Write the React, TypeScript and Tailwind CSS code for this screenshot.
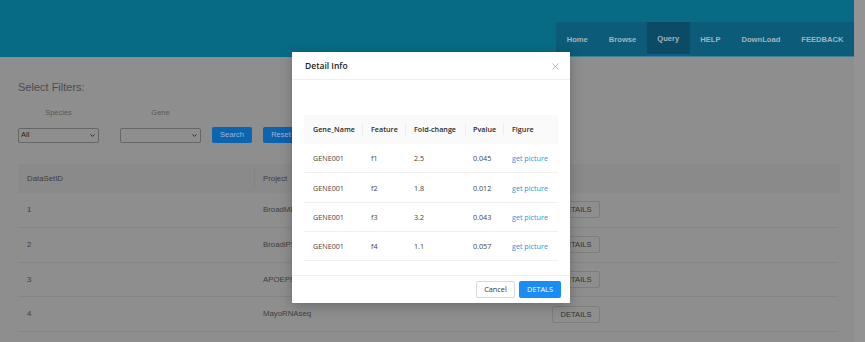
import React from "react";
import { X, ChevronDown } from "lucide-react";

const navItems = ["Home", "Browse", "Query", "HELP", "DownLoad", "FEEDBACK"];

const datasets = [
  { id: "1", project: "BroadMDMi" },
  { id: "2", project: "BroadiPSC" },
  { id: "3", project: "APOEPSC" },
  { id: "4", project: "MayoRNAseq" },
];

const genes = [
  { name: "GENE001", feature: "f1", fold: "2.5", p: "0.045" },
  { name: "GENE001", feature: "f2", fold: "1.8", p: "0.012" },
  { name: "GENE001", feature: "f3", fold: "3.2", p: "0.043" },
  { name: "GENE001", feature: "f4", fold: "1.1", p: "0.057" },
];

const cols = "grid grid-cols-[58px_43px_60px_38px_54px]";

// dimmed select box, drawn by hand so it looks the same everywhere
const FakeSelect = ({ value }: { value: string }) => (
  <div className="flex items-center justify-between w-[81px] h-[15px] border border-[#666] rounded-[2px] px-[2px] text-[7.5px] text-[#262626]">
    <span>{value}</span>
    <ChevronDown size={7} strokeWidth={3} className="text-[#222]" />
  </div>
);

const DetailModal = () => (
  <div className="absolute left-[292px] top-[52px] w-[278px] h-[251px] bg-white shadow-[0_3px_12px_rgba(0,0,0,0.25)] flex flex-col font-['Open_Sans',sans-serif]">
    {/* header */}
    <div className="h-[28px] flex items-center justify-between pl-[13px] pr-[9px] pt-[2px] border-b border-[#f0f0f0]">
      <span className="text-[8.5px] font-semibold text-[#222]">Detail Info</span>
      <X size={11} strokeWidth={1.3} className="text-[#888]" />
    </div>

    {/* body */}
    <div className="flex-1 px-[12px] pt-[35px]">
      <div className={`${cols} h-[29px] bg-[#fafafa] items-center text-[7.2px] font-semibold text-[#2b2b2b] whitespace-nowrap`}>
        {["Gene_Name", "Feature", "Fold-change", "Pvalue", "Figure"].map((h, i) => (
          <div key={h} className={`h-full flex items-center relative ${i === 3 ? "pl-[8px]" : "pl-[9px]"}`}>
            {i > 0 && <span className="absolute left-0 top-[9px] h-[11px] w-px bg-[#ececec]" />}
            {h}
          </div>
        ))}
      </div>
      {genes.map((g) => (
        <div
          key={g.feature}
          className={`${cols} h-[29.3px] pt-[1px] items-center border-b border-[#f0f0f0] text-[7.2px] text-[#444] whitespace-nowrap`}
        >
          <div className="pl-[9px]">{g.name}</div>
          <div className="pl-[9px]">{g.feature}</div>
          <div className="pl-[9px]">{g.fold}</div>
          <div className="pl-[8px]">{g.p}</div>
          <div className="pl-[9px] text-[#2f94d6]">get picture</div>
        </div>
      ))}
    </div>

    {/* footer */}
    <div className="h-[28px] border-t border-[#f0f0f0] flex items-center justify-end gap-[4px] pr-[9px]">
      <button className="w-[39px] h-[17px] border border-[#d9d9d9] rounded-[2px] text-[7.3px] text-[#333] bg-white">
        Cancel
      </button>
      <button className="w-[42px] h-[17px] rounded-[2px] text-[7.3px] text-white bg-[#1a8cf5]">
        DETALS
      </button>
    </div>
  </div>
);

const App = () => {
  return (
    <div className="relative w-[865px] h-[342px] overflow-hidden flex bg-[#8e8e8e] font-['Liberation_Sans',Arial,sans-serif]">
      <div className="w-[854px] flex flex-col">
        {/* top bar */}
        <div className="h-[57px] bg-[#086b85] flex items-end justify-end">
          <nav className="h-[35px] flex bg-[#0c5b78] border-b border-[#3d7f93]">
            {navItems.map((item) => (
              <div
                key={item}
                className={`flex items-center pt-[2px] px-[10.5px] text-[7.6px] font-bold text-[#a3b4be] ${
                  item === "Query" ? "bg-[#0b4b65] border-b-2 border-[#0e5d8c]" : ""
                }`}
              >
                {item}
              </div>
            ))}
          </nav>
        </div>

        {/* filters */}
        <div className="px-[18px]">
          <div className="mt-[24px] text-[11px] leading-[13px] text-[#4c4c4c]">Select Filters:</div>
          <div className="mt-[14px] flex text-[7.5px] text-[#5a5a5a] leading-[10px]">
            <span className="w-[81px] text-center">Species</span>
            <span className="ml-[21px] w-[81px] text-center">Gene</span>
          </div>
          <div className="mt-[9px] flex items-center">
            <FakeSelect value="All" />
            <div className="ml-[21px]">
              <FakeSelect value="" />
            </div>
            <button className="ml-[11px] w-[40px] h-[16px] bg-[#0c63ae] rounded-[2px] text-[7.5px] text-[#9cb8d6]">
              Search
            </button>
            <button className="ml-[11px] w-[36px] h-[16px] bg-[#0c63ae] rounded-[2px] text-[7.5px] text-[#9cb8d6]">
              Reset
            </button>
          </div>

          {/* datasets table */}
          <div className="mt-[21px] w-[822px] text-[7.8px] text-[#3e3e3e]">
            <div className="flex h-[29px] items-center bg-[#8a8a8a]">
              <div className="w-[236px] pl-[9px]">DataSetID</div>
              <div className="h-[20px] w-px bg-[#838383]" />
              <div className="pl-[8px]">Project</div>
            </div>
            {datasets.map((d) => (
              <div key={d.id} className="flex h-[34.8px] items-center border-b border-[#858585] w-[820px]">
                <div className="w-[237px] pl-[9px]">{d.id}</div>
                <div className="w-[297px] pl-[8px]">{d.project}</div>
                <button className="w-[48px] h-[17px] border border-[#7d7d7d] rounded-[2px] text-[7.6px] text-[#343434]">
                  DETAILS
                </button>
              </div>
            ))}
          </div>
        </div>
      </div>
      <div className="flex-1 bg-[#939393]" />

      <DetailModal />
    </div>
  );
};

export default App;
